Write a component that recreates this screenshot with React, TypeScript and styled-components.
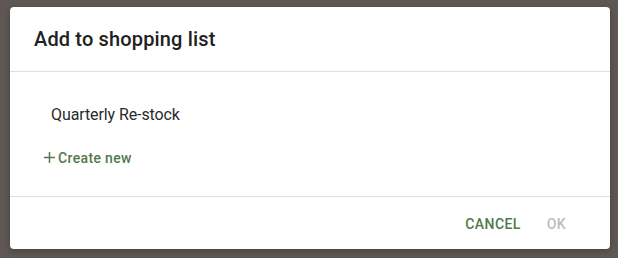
import styled, { createGlobalStyle } from "styled-components";

const GlobalStyle = createGlobalStyle`
  html, body {
    margin: 0;
    padding: 0;
    background: #5e5754;
    font-family: Roboto, "Liberation Sans", sans-serif;
  }
  * {
    box-sizing: border-box;
  }
`;

const Backdrop = styled.div`
  width: 618px;
  height: 258px;
  padding: 7px 8px 9px 10px;
`;

const Dialog = styled.div`
  width: 600px;
  height: 242px;
  display: flex;
  flex-direction: column;
  background: #ffffff;
  border-radius: 4px;
  box-shadow: 0 2px 6px rgba(0, 0, 0, 0.25);
  overflow: hidden;
`;

const Header = styled.div`
  height: 65px;
  padding: 0 24px;
  display: flex;
  align-items: center;
  border-bottom: 1px solid #dcdfe6;
`;

const Title = styled.h2`
  margin: 0;
  font-size: 20px;
  font-weight: 500;
  letter-spacing: 0.15px;
  color: #212121;
`;

const Body = styled.div`
  flex: 1;
  padding: 18px 24px 0;
  display: flex;
  flex-direction: column;
  align-items: flex-start;
  border-bottom: 1px solid #dcdfe6;
`;

const ListItem = styled.div`
  height: 48px;
  padding: 0 17px;
  display: flex;
  align-items: center;
  font-size: 16px;
  letter-spacing: -0.1px;
  color: #2a2a2a;
`;

const TextButton = styled.button<{ $disabled?: boolean }>`
  height: 36px;
  padding: 0 8px;
  border: none;
  background: none;
  display: flex;
  align-items: center;
  gap: 3px;
  font-family: Roboto, "Liberation Sans", sans-serif;
  font-size: 14px;
  font-weight: 500;
  letter-spacing: 0.3px;
  color: ${(p) => (p.$disabled ? "#bdbdbd" : "#51784c")};
  cursor: ${(p) => (p.$disabled ? "default" : "pointer")};
`;

const CreateButton = styled(TextButton)`
  margin-top: 2px;
  padding: 0 10px;
  letter-spacing: 0.35px;
`;

const PlusIcon = styled.svg`
  width: 11px;
  height: 11px;
  margin-top: -1px;
`;

const Footer = styled.div`
  height: 52px;
  padding: 0 36px 0 0;
  display: flex;
  justify-content: flex-end;
  align-items: center;
  gap: 10px;
`;

const ActionButton = styled(TextButton)`
  text-transform: uppercase;
  letter-spacing: 0.4px;
  margin-top: 2px;
`;

export default function App() {
  return (
    <>
      <GlobalStyle />
      <Backdrop>
        <Dialog>
          <Header>
            <Title>Add to shopping list</Title>
          </Header>
          <Body>
            <ListItem>Quarterly Re-stock</ListItem>
            <CreateButton>
              <PlusIcon viewBox="0 0 11 11">
                <path d="M5.5 0V11M0 5.5H11" stroke="currentColor" strokeWidth="1.5" fill="none" />
              </PlusIcon>
              Create new
            </CreateButton>
          </Body>
          <Footer>
            <ActionButton>Cancel</ActionButton>
            <ActionButton $disabled>Ok</ActionButton>
          </Footer>
        </Dialog>
      </Backdrop>
    </>
  );
}
